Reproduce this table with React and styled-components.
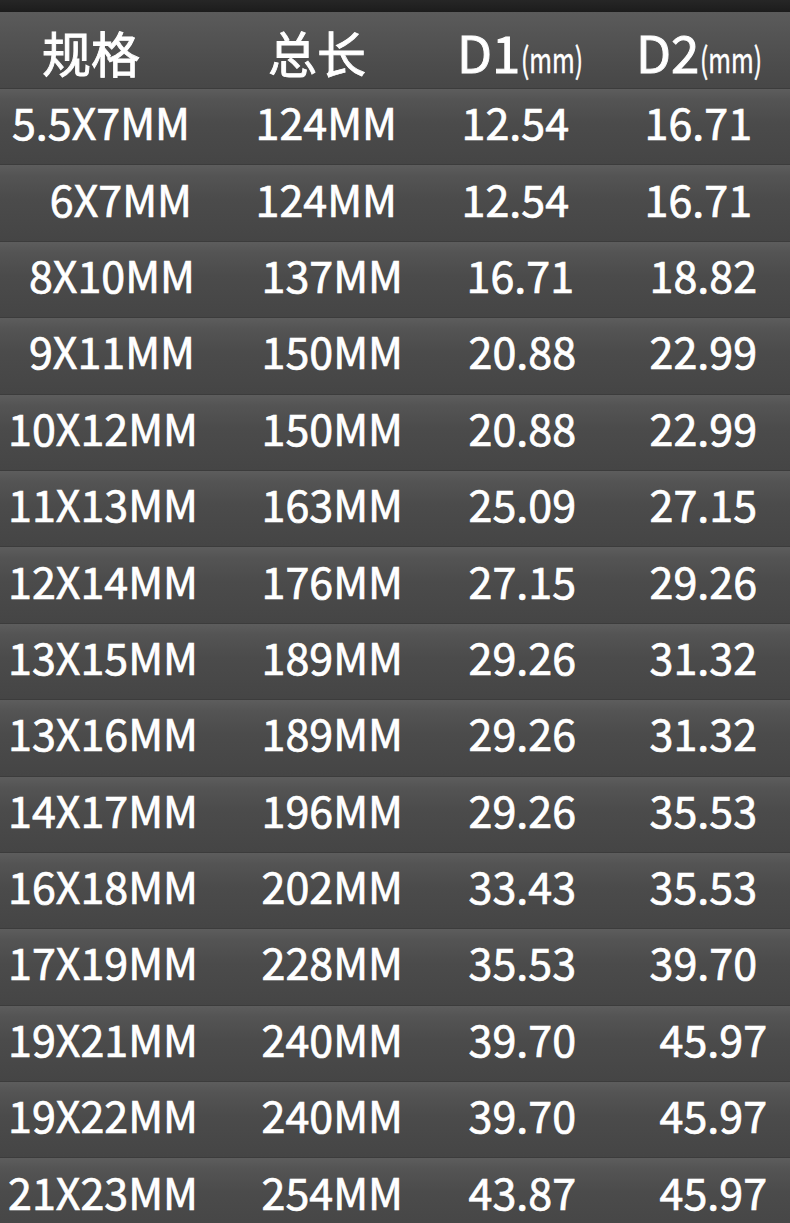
import React from "react";
import styled, { createGlobalStyle } from "styled-components";

const Global = createGlobalStyle`
  html, body { margin: 0; padding: 0; background: #1e1e1e; }
  body { font-family: "Noto Sans CJK SC", "Noto Sans", sans-serif; }
`;

const Page = styled.div`
  width: 790px;
  height: 1223px;
  overflow: hidden;
  background: #1e1e1e;
  display: flex;
  flex-direction: column;
`;

const TopStrip = styled.div`
  height: 12px;
  flex: none;
  background: linear-gradient(to bottom, #262626, #1c1c1c);
`;

const Row = styled.div`
  flex: none;
  height: ${(p) => p.$h}px;
  display: grid;
  grid-template-columns: 200px 210px 180px 200px;
  align-items: center;
  border-top: 1px solid #3c3c3c;
  box-sizing: border-box;
  background: linear-gradient(
    to bottom,
    #5d5d5d 0%,
    #545454 14%,
    #4b4b4b 45%,
    #454545 100%
  );
  color: #ffffff;
`;

const HeaderRow = styled(Row)`
  border-top: none;
  background: linear-gradient(
    to bottom,
    #5b5b5b 0%,
    #545454 30%,
    #4c4c4c 70%,
    #474747 100%
  );
`;

const Cell = styled.div`
  text-align: right;
  padding-right: ${(p) => p.$pr}px;
  font-size: 43px;
  font-weight: 400;
  -webkit-text-stroke: 0.7px #ffffff;
  line-height: 1;
  white-space: nowrap;
  margin-top: -10px;
`;

const HeadCell = styled.div`
  text-align: left;
  padding-left: ${(p) => p.$pl}px;
  font-size: 49px;
  font-weight: 400;
  -webkit-text-stroke: 0.9px #ffffff;
  line-height: 1;
  white-space: nowrap;
  display: flex;
  align-items: baseline;
  padding-top: 2px;
`;

const Latin = styled.span`
  font-size: 51px;
`;

const Unit = styled.span`
  display: inline-block;
  font-size: 35px;
  -webkit-text-stroke: 0.5px #ffffff;
  transform: scaleX(0.7);
  transform-origin: left bottom;
  margin-left: 1px;
`;

const base = [2, 7, 14, 33];
const wide = [2, 7, 14, 23];

const rows = [
  ["5.5X7MM", "124MM", "12.54", "16.71", [10, 13, 21, 38]],
  ["6X7MM", "124MM", "12.54", "16.71", [8, 13, 21, 38]],
  ["8X10MM", "137MM", "16.71", "18.82", [5, 7, 16, 33]],
  ["9X11MM", "150MM", "20.88", "22.99", [5, 7, 14, 33]],
  ["10X12MM", "150MM", "20.88", "22.99", base],
  ["11X13MM", "163MM", "25.09", "27.15", base],
  ["12X14MM", "176MM", "27.15", "29.26", base],
  ["13X15MM", "189MM", "29.26", "31.32", base],
  ["13X16MM", "189MM", "29.26", "31.32", base],
  ["14X17MM", "196MM", "29.26", "35.53", base],
  ["16X18MM", "202MM", "33.43", "35.53", base],
  ["17X19MM", "228MM", "35.53", "39.70", base],
  ["19X21MM", "240MM", "39.70", "45.97", wide],
  ["19X22MM", "240MM", "39.70", "45.97", wide],
  ["21X23MM", "254MM", "43.87", "45.97", wide],
];

export default function App() {
  return (
    <Page>
      <Global />
      <TopStrip />
      <HeaderRow $h={76}>
        <HeadCell $pl={42}>规格</HeadCell>
        <HeadCell $pl={68}>总长</HeadCell>
        <HeadCell $pl={47}>
          <Latin>D1</Latin>
          <Unit>(mm)</Unit>
        </HeadCell>
        <HeadCell $pl={46}>
          <Latin>D2</Latin>
          <Unit>(mm)</Unit>
        </HeadCell>
      </HeaderRow>
      {rows.map((r, i) => (
        <Row key={i} $h={76.4}>
          {r.slice(0, 4).map((t, j) => (
            <Cell key={j} $pr={r[4][j]}>
              {t}
            </Cell>
          ))}
        </Row>
      ))}
    </Page>
  );
}
